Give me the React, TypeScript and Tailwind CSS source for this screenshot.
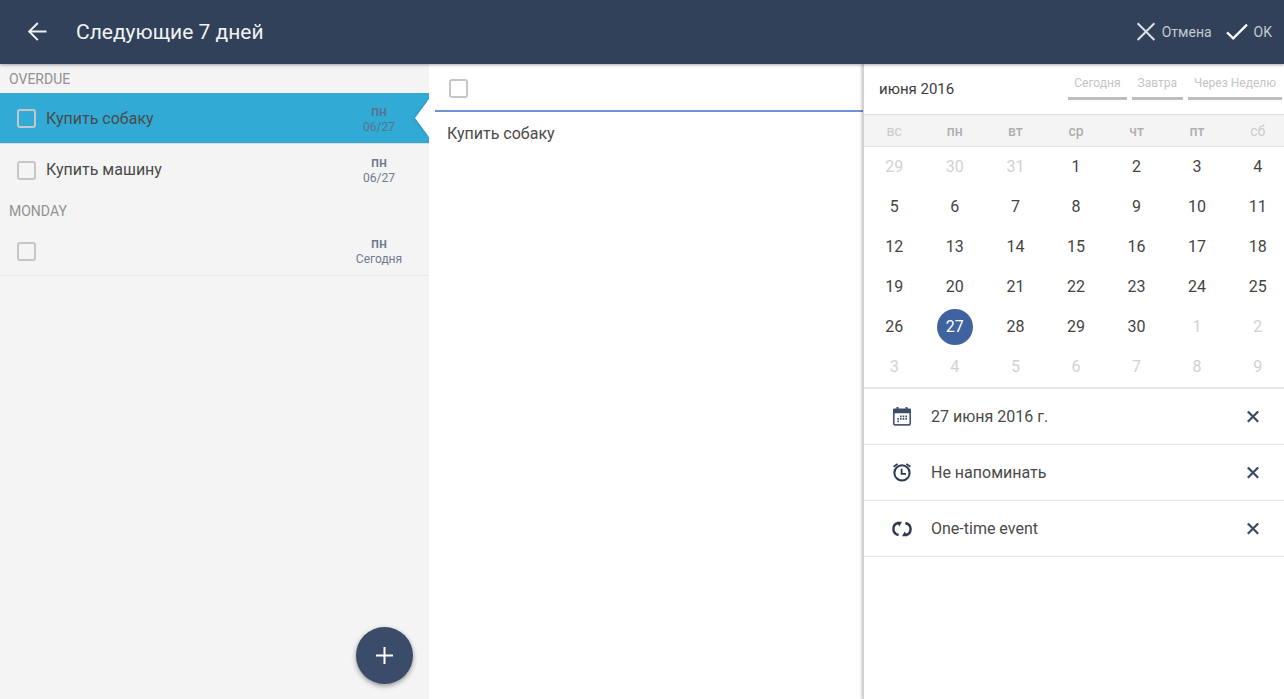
import { useState } from "react";

const weekdays = ["вс", "пн", "вт", "ср", "чт", "пт", "сб"];

const weeks = [
  [29, 30, 31, 1, 2, 3, 4],
  [5, 6, 7, 8, 9, 10, 11],
  [12, 13, 14, 15, 16, 17, 18],
  [19, 20, 21, 22, 23, 24, 25],
  [26, 27, 28, 29, 30, 1, 2],
  [3, 4, 5, 6, 7, 8, 9],
];

function isOutside(week: number, day: number) {
  return (week === 0 && day > 20) || (week > 3 && day < 15);
}

function BackIcon() {
  return (
    <svg viewBox="0 0 20 20" className="size-5" fill="none" stroke="#eef0f3" strokeWidth="2">
      <path d="M19.5 9.5H2M10.8 1L2.2 9.5l8.6 8.6" />
    </svg>
  );
}

function CancelIcon() {
  return (
    <svg viewBox="0 0 20 20" className="size-5" fill="none" stroke="#dde1e6" strokeWidth="2">
      <path d="M1.6 1.2l16.8 16.8M18.4 1.2L1.6 18" />
    </svg>
  );
}

function OkIcon() {
  return (
    <svg viewBox="0 0 22 18" className="h-[18px] w-[22px]" fill="none" stroke="#ffffff" strokeWidth="2.2">
      <path d="M1 9.4l6.2 6L21 1.6" />
    </svg>
  );
}

function CalendarIcon() {
  return (
    <svg viewBox="0 0 20 20" className="size-5" fill="none">
      <rect x="1.8" y="3" width="16.4" height="14.8" rx="1" stroke="#4a5b77" strokeWidth="1.7" />
      <path d="M1 2.7Q1 1.5 2.2 1.5H17.8Q19 1.5 19 2.7V6.2H1z" fill="#3c4d69" />
      <path d="M5.5 0v3M14.5 0v3" stroke="#3c4d69" strokeWidth="2" />
      <path
        d="M8 9.4h7.4M5.3 11.9h10.1"
        stroke="#3c4d69"
        strokeWidth="1.7"
        strokeDasharray="1.6 1.1"
      />
      <path d="M5.3 14.4h1.6" stroke="#3c4d69" strokeWidth="1.7" />
    </svg>
  );
}

function AlarmIcon() {
  return (
    <svg viewBox="0 0 20 20" className="size-5" fill="none" stroke="#2b3950">
      <circle cx="10" cy="9.9" r="7.6" strokeWidth="2" />
      <path d="M9.6 5.8v5h4.4" strokeWidth="1.8" />
      <path d="M1.6 3.8L5.6 .9M18.4 3.8L14.4 .9" strokeWidth="1.7" />
    </svg>
  );
}

function RepeatIcon() {
  return (
    <svg viewBox="0 0 20 20" className="size-5" fill="none" stroke="#2b3950" strokeWidth="2.4">
      <path d="M6.6 16C3.2 15.2 1.4 12.9 1.4 10c0-3 1.8-5.5 5-6" />
      <path d="M13.4 4c3.4.8 5.2 3.1 5.2 6 0 3-1.8 5.5-5 6" />
      <path d="M4.8 2.8H10L7.2 7.6z" fill="#2b3950" stroke="none" />
      <path d="M15.2 17.2H10l2.8-4.8z" fill="#2b3950" stroke="none" />
    </svg>
  );
}

function RemoveIcon() {
  return (
    <svg viewBox="0 0 12 12" className="size-3" fill="none" stroke="#3b4c69" strokeWidth="2.2">
      <path d="M.8 .4l10.4 10.4M11.2 .4L.8 10.8" />
    </svg>
  );
}

function Checkbox({ label }: { label: string }) {
  return (
    <input
      type="checkbox"
      aria-label={label}
      className="size-[19px] shrink-0 appearance-none rounded-[3px] border-2 border-[#c6c6c6] checked:bg-[#3f639f]"
    />
  );
}

type TaskProps = { title: string; day: string; date: string; selected?: boolean };

function Task({ title, day, date, selected }: TaskProps) {
  return (
    <li
      className={
        selected
          ? "relative flex h-[51px] items-center border-b border-[#dcdcdc] bg-[#32aad6] pt-px pr-5 pl-[17px]"
          : "flex h-[51px] items-center border-b border-transparent pt-0.5 pr-5 pl-[17px] only:border-[#e6e6e6]"
      }
    >
      <Checkbox label={title || day} />
      <span className="ml-2.5 flex-1 text-base text-[#4a4a4a]">{title}</span>
      <span
        className={
          selected
            ? "w-[60px] text-center text-xs text-[#56738c]"
            : "w-[60px] text-center text-xs text-[#6f7b90]"
        }
      >
        <span className="block text-sm leading-4 font-medium">{day}</span>
        {date}
      </span>
      {selected && (
        <svg
          viewBox="0 0 14 38"
          className="absolute top-1/2 right-0 h-[38px] w-3.5 -translate-y-1/2 drop-shadow-[-1px_0_1px_rgba(0,0,0,0.15)]"
        >
          <path d="M14 0L0 19l14 19z" fill="#ffffff" />
        </svg>
      )}
    </li>
  );
}

const options = [
  { text: "27 июня 2016 г.", Icon: CalendarIcon },
  { text: "Не напоминать", Icon: AlarmIcon },
  { text: "One-time event", Icon: RepeatIcon },
];

export default function App() {
  const [selected, setSelected] = useState("4-27");

  return (
    <div className="flex min-h-screen flex-col bg-white font-['Roboto',sans-serif] text-[#4a4a4a]">
      <header className="relative z-10 flex h-16 shrink-0 items-center bg-[#31415a] pr-3 pl-[27px] shadow-[0_1px_3px_rgba(0,0,0,0.35)]">
        <button aria-label="Назад">
          <BackIcon />
        </button>
        <h1 className="ml-[29px] flex-1 pt-0.5 text-[21px] text-[#f1f2f4]">Следующие 7 дней</h1>
        <div className="flex gap-3.5 text-sm text-[#c3c9d1]">
          <button className="flex items-center gap-1.5">
            <CancelIcon />
            Отмена
          </button>
          <button className="flex items-center gap-1.5">
            <OkIcon />
            OK
          </button>
        </div>
      </header>

      <div className="grid flex-1 grid-cols-[429fr_434fr_421fr]">
        <aside className="flex flex-col bg-[#f4f4f4]">
          <h2 className="flex h-[29px] items-center pl-[9px] text-sm text-[#929292]">OVERDUE</h2>
          <ul>
            <Task title="Купить собаку" day="пн" date="06/27" selected />
            <Task title="Купить машину" day="пн" date="06/27" />
          </ul>
          <h2 className="flex h-[30px] items-center pt-0.5 pl-[9px] text-sm text-[#929292]">MONDAY</h2>
          <ul>
            <Task title="" day="пн" date="Сегодня" />
          </ul>
          <button
            aria-label="Добавить"
            className="mt-auto mr-4 mb-[15px] flex size-[57px] items-center justify-center self-end rounded-full bg-[#3b4c6b] shadow-[0_2px_5px_rgba(0,0,0,0.4)]"
          >
            <svg viewBox="0 0 17 17" className="size-[17px]" stroke="#ffffff" strokeWidth="2">
              <path d="M8.5 0v17M0 8.5h17" />
            </svg>
          </button>
        </aside>

        <main>
          <div className="ml-1.5 flex h-12 items-center border-b-2 border-[#6d92d6] pt-0.5 pl-3.5">
            <Checkbox label="Выполнено" />
          </div>
          <textarea
            aria-label="Задача"
            defaultValue="Купить собаку"
            className="block w-full resize-none px-[18px] py-2.5 text-base outline-none"
          />
        </main>

        <section className="min-w-0 overflow-hidden border-l border-[#d4d4d4] bg-white shadow-[-1px_0_3px_rgba(0,0,0,0.3)]">
          <div className="flex h-[50px] items-center justify-between pr-0.5 pl-[15px]">
            <h2 className="text-[15px] text-[#3c3c3c]">июня 2016</h2>
            <div className="flex h-9 items-end gap-[5px] self-start text-xs text-[#c4c4c4]">
              <button className="border-b-[3px] border-[#bdbdbd] px-1.5 pb-1.5">Сегодня</button>
              <button className="border-b-[3px] border-[#bdbdbd] px-1.5 pb-1.5">Завтра</button>
              <button className="border-b-[3px] border-[#bdbdbd] px-1.5 pb-1.5">Через Неделю</button>
            </div>
          </div>
          <table className="w-[calc(100%+4px)] table-fixed border-collapse text-center">
            <thead>
              <tr className="h-8 border-y border-[#dedede] bg-[#f4f4f4] text-sm">
                {weekdays.map((d, i) => (
                  <th
                    key={d}
                    scope="col"
                    className={
                      i === 0 || i === 6 ? "p-0 font-normal text-[#cacaca]" : "p-0 font-medium text-[#b0b0b0]"
                    }
                  >
                    {d}
                  </th>
                ))}
              </tr>
            </thead>
            <tbody>
              {weeks.map((week, w) => (
                <tr key={w} className="h-10">
                  {week.map((day) => {
                    const key = `${w}-${day}`;
                    return (
                      <td key={key} className="p-0">
                        <button
                          onClick={() => setSelected(key)}
                          className={
                            key === selected
                              ? "mx-auto block size-9 rounded-full bg-[#3f639f] text-base text-white"
                              : isOutside(w, day)
                                ? "mx-auto block size-9 text-base text-[#d2d2d2]"
                                : "mx-auto block size-9 text-base text-[#444444]"
                          }
                        >
                          {day}
                        </button>
                      </td>
                    );
                  })}
                </tr>
              ))}
            </tbody>
          </table>
          <ul className="border-t-2 border-[#e8e8e8]">
            {options.map(({ text, Icon }) => (
              <li key={text} className="flex h-14 items-center border-b border-[#e6e6e6] pt-0.5 pr-[25px] pl-7">
                <Icon />
                <span className="ml-[19px] flex-1 text-base">{text}</span>
                <button aria-label={`Убрать: ${text}`}>
                  <RemoveIcon />
                </button>
              </li>
            ))}
          </ul>
        </section>
      </div>
    </div>
  );
}
